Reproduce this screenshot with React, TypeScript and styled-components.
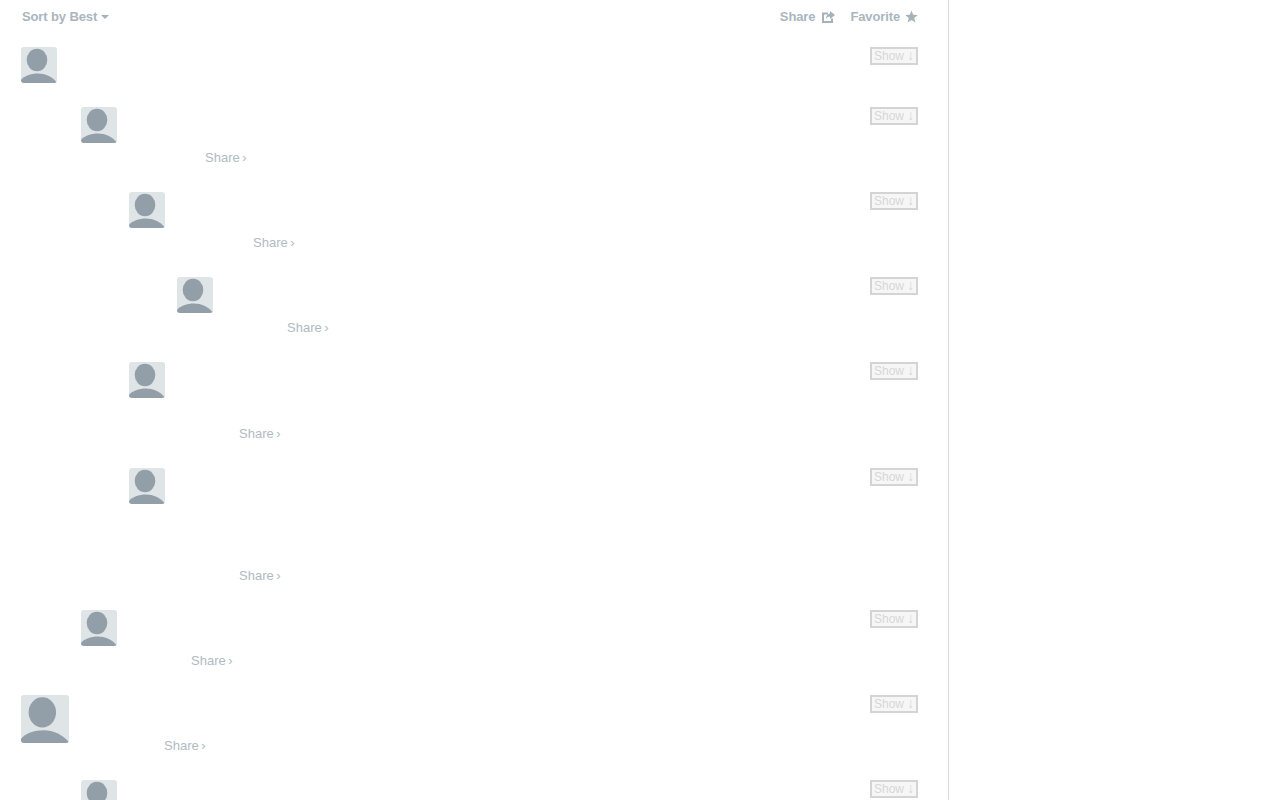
import React from 'react';
import styled, {createGlobalStyle} from 'styled-components';

const GlobalStyle = createGlobalStyle`
  html, body {
    margin: 0;
    height: 100%;
    overflow: hidden;
    background: #fff;
    font-family: "Liberation Sans", Arial, sans-serif;
  }
`

const Page = styled.div`
  width: 949px;
  height: 800px;
  box-sizing: border-box;
  border-right: 1px solid #d9dcde;
  padding: 0 30px 0 21px;
  overflow: hidden;
`

const NavBar = styled.div`
  display: flex;
  justify-content: space-between;
  align-items: center;
  height: 33px;
  margin-bottom: 14px;
  padding-left: 1px;
  font-size: 13px;
  font-weight: 700;
  letter-spacing: -0.12px;
  color: #aab6bd;
`

const NavGroup = styled.div`
  display: flex;
  align-items: center;
  gap: 15px;
`

const NavItem = styled.span<{ $gap: number }>`
  display: flex;
  align-items: center;
  gap: ${p => p.$gap}px;
`

const Caret = styled.span`
  width: 0;
  height: 0;
  margin-left: 4px;
  border-left: 4px solid transparent;
  border-right: 4px solid transparent;
  border-top: 4px solid #a5b2b9;
`

const Post = styled.div<{ $depth: number, $height: number }>`
  height: ${p => p.$height}px;
  padding-left: ${p => p.$depth}px;
`

const PostHead = styled.div`
  display: flex;
  justify-content: space-between;
  align-items: flex-start;
`

const Avatar = styled.svg<{ $size: number }>`
  display: block;
  width: ${p => p.$size}px;
  height: ${p => p.$size}px;
  border-radius: 3px;
  background: #dfe4e7;
`

const ShowButton = styled.button`
  width: 48px;
  height: 18px;
  padding: 0 0 0 2px;
  box-sizing: border-box;
  border: 2px solid #d4d4d4;
  background: #f6f6f6;
  color: #d6d6d6;
  font-family: inherit;
  font-size: 12px;
  line-height: 14px;
  text-align: left;
  white-space: nowrap;
`

const ShowArrow = styled.span`
  font-size: 14px;
  line-height: 12px;
`

const ShareLink = styled.a<{ $left: number, $top: number }>`
  display: block;
  width: max-content;
  margin-left: ${p => p.$left}px;
  margin-top: ${p => p.$top}px;
  font-size: 13px;
  line-height: 16px;
  word-spacing: -1px;
  color: #b0bbc1;
`

interface PostData {
  depth: number;
  height: number;
  size?: number;
  shareLeft?: number;
  shareTop?: number;
}

const posts: PostData[] = [
  {depth: 0, height: 60},
  {depth: 60, height: 85, shareLeft: 124, shareTop: 7},
  {depth: 108, height: 85, shareLeft: 124, shareTop: 7},
  {depth: 156, height: 85, shareLeft: 110, shareTop: 7},
  {depth: 108, height: 106, shareLeft: 110, shareTop: 28},
  {depth: 108, height: 142, shareLeft: 110, shareTop: 64},
  {depth: 60, height: 85, shareLeft: 110, shareTop: 7},
  {depth: 0, height: 85, size: 48, shareLeft: 143, shareTop: -5},
  {depth: 60, height: 85},
]

const UserPicture = ({size}: { size: number }) => (
  <Avatar $size={size} viewBox="0 0 36 36">
    <ellipse cx="16" cy="13" rx="10.3" ry="11.3" fill="#929ea8"/>
    <path d="M0 36v-3c3-4 10-6.500 17-6.500s14 3 19 9v.5z" fill="#929ea8"/>
  </Avatar>
)

const ShareIcon = () => (
  <svg width="13" height="12" viewBox="0 0 13 12">
    <path d="M0 1.500h6v2H2v6.500h7V7.500h2V12H0z" fill="#a5b2b9"/>
    <path d="M8 0l5 4-5 4V5.600C6.400 5.600 5 6.300 3.800 8 4 5 5.600 2.800 8 2.500z" fill="#a5b2b9"/>
  </svg>
)

const StarIcon = () => (
  <svg width="13" height="13" viewBox="0 0 13 13">
    <path d="M6.500 .5 8.200 4.800 12.800 5.100 9.200 8 10.400 12.500 6.500 10 2.600 12.500 3.800 8 .2 5.100 4.800 4.800z" fill="#a5b2b9"/>
  </svg>
)

const App = () => (
  <Page>
    <GlobalStyle/>
    <NavBar>
      <NavItem $gap={0}>Sort by Best<Caret/></NavItem>
      <NavGroup>
        <NavItem $gap={7}>Share <ShareIcon/></NavItem>
        <NavItem $gap={5}>Favorite <StarIcon/></NavItem>
      </NavGroup>
    </NavBar>
    {posts.map((post, index) => (
      <Post key={index} $depth={post.depth} $height={post.height}>
        <PostHead>
          <UserPicture size={post.size || 36}/>
          <ShowButton disabled>Show <ShowArrow>↓</ShowArrow></ShowButton>
        </PostHead>
        {post.shareLeft !== undefined &&
          <ShareLink $left={post.shareLeft} $top={post.shareTop || 0}>Share ›</ShareLink>}
      </Post>
    ))}
  </Page>
);

export default App;
